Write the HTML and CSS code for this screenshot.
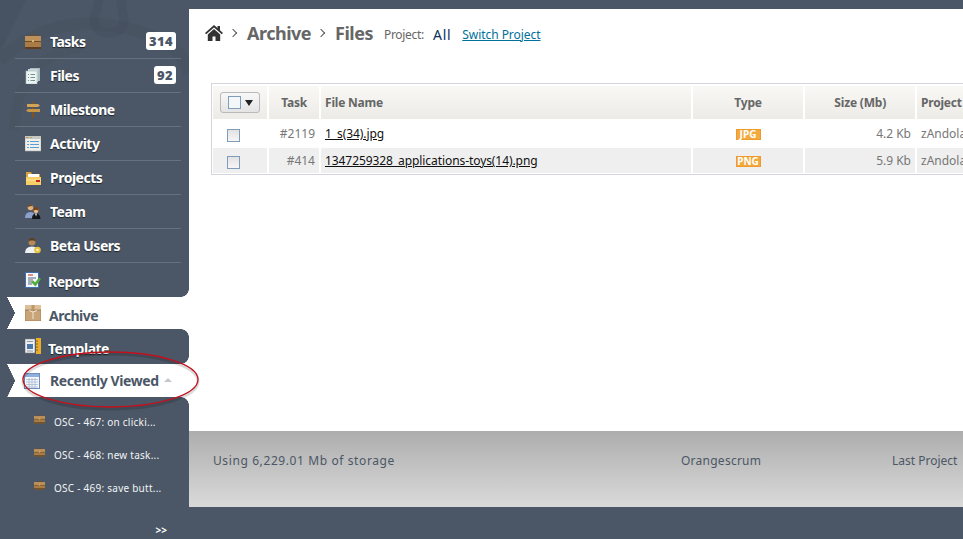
FILE: index.html
```html
<!DOCTYPE html>
<html lang="en">
<head>
    <meta charset="UTF-8">
    <meta name="viewport" content="width=device-width, initial-scale=1.0">
    <title>Archive - Files</title>
    <link rel="stylesheet" href="styles.css">
</head>
<body>
    <svg class="defs" width="0" height="0">
        <symbol id="i-brief" viewBox="0 0 16 16" preserveAspectRatio="none">
            <path d="M5.500 2.500V1h5v1.500" fill="none" stroke="#6b4a22"/>
            <rect x="0" y="2" width="16" height="13" fill="#a97c45"/>
            <rect x="0" y="2" width="16" height="5" fill="#bd9159"/>
            <rect x="0" y="13" width="16" height="2" fill="#5e4020"/>
            <rect x="0" y="7" width="16" height="1" fill="#6f4c24"/>
            <rect x="7" y="6" width="2" height="2" fill="#d9b680"/>
        </symbol>
        <symbol id="i-files" viewBox="0 0 16 16">
            <rect x="5" y="0" width="10" height="13" fill="#a7bcc0"/>
            <rect x="3" y="1" width="10" height="13" fill="#c9d8da"/>
            <rect x="1" y="3" width="11" height="13" fill="#eef4f2" stroke="#a9bdbd" stroke-width=".6"/>
            <path d="M3 6.500h1M5.500 6.500H10M3 9.500h1M5.500 9.500H10M3 12.500h1M5.500 12.500H10" stroke="#6d9197"/>
        </symbol>
        <symbol id="i-sign" viewBox="0 0 16 16">
            <rect x="7" y="0" width="2" height="16" fill="#7d5320"/>
            <path d="M2 2h11l2 1.500-2 1.500H2z" fill="#d1a458"/>
            <path d="M15 7H3L1 8.500 3 10h12z" fill="#c49646"/>
        </symbol>
        <symbol id="i-window" viewBox="0 0 16 16">
            <rect x="0" y="0" width="16" height="15" fill="#f1efea" stroke="#a8a8a4" stroke-width=".6"/>
            <rect x="0" y="0" width="16" height="3" fill="#c9c7c2"/>
            <path d="M1.500 1.500h1" stroke="#d23a2a"/>
            <path d="M3.500 1.500h1" stroke="#e3a92a"/>
            <path d="M5.500 1.500h1" stroke="#5aa83a"/>
            <path d="M2 5.500h2M5 5.500h9M2 8.500h2M5 8.500h9M2 11.500h2M5 11.500h9" stroke="#5a9fdc"/>
        </symbol>
        <symbol id="i-folder" viewBox="0 0 16 16">
            <path d="M1 2h5l1 2h8v10H1z" fill="#d6a53a"/>
            <rect x="3" y="4" width="11" height="4" fill="#fff"/>
            <rect x="1" y="7" width="15" height="8" fill="#f6cf66"/>
            <rect x="1" y="9.500" width="15" height="1" fill="#fbe7a6"/>
            <rect x="11" y="10" width="4" height="2" fill="#c8261c"/>
        </symbol>
        <symbol id="i-team" viewBox="0 0 16 16">
            <circle cx="5.500" cy="3.500" r="2.800" fill="#e2b27e"/>
            <path d="M2.500 3.500Q3 0 5.500 .5T8.500 3L7 2 4 2.500z" fill="#6b431c"/>
            <path d="M0 14q0-6 5.500-6T11 14z" fill="#8f9fcc"/>
            <circle cx="11" cy="6.500" r="2.500" fill="#eebb88"/>
            <path d="M8.500 9V6q0-3 2.500-3t2.500 3v3l-1-3h-3z" fill="#7a4413"/>
            <path d="M7 15q0-5.500 4-5.500t4.500 5.500z" fill="#15151a"/>
            <path d="M10 9.500h2l-1 3z" fill="#fff"/>
        </symbol>
        <symbol id="i-beta" viewBox="0 0 16 16">
            <circle cx="7" cy="4" r="3.500" fill="#b98a58"/>
            <path d="M3.500 4Q3.500 0 7 0t3.500 4L9 2.500H5z" fill="#5b3c1e"/>
            <path d="M0 15q0-6.500 7-6.500t6 6.500z" fill="#eef1f4"/>
            <circle cx="12.500" cy="12" r="3.300" fill="#e8c23a"/>
            <circle cx="12.500" cy="12" r="1.200" fill="#fff6c8"/>
        </symbol>
        <symbol id="i-report" viewBox="0 0 16 16">
            <rect x=".5" y=".5" width="13" height="15" fill="#f6f8fb" stroke="#3f6fb0"/>
            <path d="M3 3h5" stroke="#c8261c"/>
            <path d="M3 6h8M3 8h5M3 10h4M3 12h4" stroke="#56667a"/>
            <path d="M6 10l2.500-1.500L10 10.500 14 5.500l2 1.500-5.500 7.500z" fill="#52ab3d"/>
        </symbol>
        <symbol id="i-box" viewBox="0 0 16 16">
            <rect x="0" y="0" width="16" height="16" fill="#c9a477" stroke="#93714a" stroke-width=".6"/>
            <rect x="0" y="0" width="16" height="5" fill="#dcc09b"/>
            <path d="M0 5h16" stroke="#8d6a42" stroke-width=".7"/>
            <path d="M4 5.500q4 3 8 0M8 7v7" stroke="#f0e6d6" fill="none"/>
            <rect x="6.500" y="0" width="3" height="5" fill="#bd9664"/>
        </symbol>
        <symbol id="i-template" viewBox="0 0 16 16">
            <rect x="0" y="1" width="10" height="14" fill="#eef0f2" stroke="#777" stroke-width=".6"/>
            <rect x="2" y="6" width="6" height="5" fill="#4f76a8"/>
            <path d="M2 3.500h6M2 13h6" stroke="#8a97a8"/>
            <rect x="11" y="0" width="5" height="16" fill="#e9ad2a"/>
            <path d="M11 3h2M11 6h2M11 9h2M11 12h2" stroke="#8f6510"/>
        </symbol>
        <symbol id="i-table" viewBox="0 0 16 16">
            <rect x=".5" y=".5" width="15" height="15" fill="#f4f7fc" stroke="#6d8fc0"/>
            <rect x="1" y="1" width="14" height="3" fill="#8fb0dc"/>
            <path d="M2 6.500h12M2 9h12M2 11.500h12M2 14h12M5 5v10M8 5v10M11 5v10" stroke="#a9bad2" stroke-width=".8"/>
        </symbol>
        <symbol id="i-home" viewBox="0 0 18 16">
            <path d="M9 0L0 8l1.200 1.300L9 2.400l7.800 6.900L18 8l-3-2.700V1h-2.500v2.100z" fill="#333"/>
            <path d="M9 4L2.800 9.500V16H7.500v-4.500h3V16h4.700V9.500z" fill="#333"/>
        </symbol>
    </svg>

    <aside class="sidebar">
        <svg class="swirl" width="189" height="300" viewBox="0 0 189 300">
            <path d="M0 52L26 0H0z" fill="#3f4a59" opacity=".3"/>
            <path d="M0 60Q50 14 116 26T189 74" fill="none" stroke="#3f4a59" stroke-width="12" opacity=".2"/>
            <path d="M100 -4L94 20Q95 33 109 33T124 20L120 -4" fill="none" stroke="#3f4a59" stroke-width="9" opacity=".3"/>
            <path d="M14 130Q18 56 84 46" fill="none" stroke="#434e5d" stroke-width="10" opacity=".25"/>
        </svg>

        <ul class="menu">
            <li class="menu-item">
                <svg class="ico"><use href="#i-brief"/></svg>
                <span>Tasks</span>
                <b class="badge">314</b>
            </li>
            <li class="menu-item">
                <svg class="ico"><use href="#i-files"/></svg>
                <span>Files</span>
                <b class="badge">92</b>
            </li>
            <li class="menu-item">
                <svg class="ico"><use href="#i-sign"/></svg>
                <span>Milestone</span>
            </li>
            <li class="menu-item">
                <svg class="ico"><use href="#i-window"/></svg>
                <span>Activity</span>
            </li>
            <li class="menu-item">
                <svg class="ico"><use href="#i-folder"/></svg>
                <span>Projects</span>
            </li>
            <li class="menu-item">
                <svg class="ico"><use href="#i-team"/></svg>
                <span>Team</span>
            </li>
            <li class="menu-item">
                <svg class="ico"><use href="#i-beta"/></svg>
                <span>Beta Users</span>
            </li>
            <li class="menu-item menu-tight">
                <svg class="ico"><use href="#i-report"/></svg>
                <span>Reports</span>
            </li>
            <li class="menu-active">
                <svg class="ico"><use href="#i-box"/></svg>
                <span>Archive</span>
            </li>
            <li class="menu-item menu-tight menu-template">
                <svg class="ico"><use href="#i-template"/></svg>
                <span>Template</span>
            </li>
            <li class="menu-active menu-recent">
                <svg class="ico"><use href="#i-table"/></svg>
                <span>Recently Viewed</span>
                <i class="caret"></i>
            </li>
        </ul>

        <ul class="recent">
            <li><svg class="ico-small"><use href="#i-brief"/></svg>OSC - 467: on clicki...</li>
            <li><svg class="ico-small"><use href="#i-brief"/></svg>OSC - 468: new task...</li>
            <li><svg class="ico-small"><use href="#i-brief"/></svg>OSC - 469: save butt...</li>
        </ul>
        <div class="more">&gt;&gt;</div>

        <svg class="circle" width="186" height="64" viewBox="0 0 186 64">
            <ellipse cx="92.500" cy="33.500" rx="87.500" ry="27.500" fill="none" stroke="#000" stroke-opacity=".14" stroke-width="3"/>
            <ellipse cx="92.500" cy="31.500" rx="87.500" ry="27.500" fill="none" stroke="#c2101c" stroke-width="1.300"/>
        </svg>
    </aside>

    <div class="page">
        <main class="content">
            <div class="crumbs">
                <svg class="home"><use href="#i-home"/></svg>
                <span class="sep"></span>
                <h2>Archive</h2>
                <span class="sep"></span>
                <h2>Files</h2>
                <span class="project-label">Project:</span>
                <span class="project-name">All</span>
                <a class="switch" href="#">Switch Project</a>
            </div>

            <div class="grid-box">
                <table class="grid">
                    <thead>
                        <tr>
                            <th class="c-check"><span class="select-all"><i class="check"></i><i class="down"></i></span></th>
                            <th class="c-task">Task</th>
                            <th class="c-name">File Name</th>
                            <th class="c-type">Type</th>
                            <th class="c-size">Size (Mb)</th>
                            <th class="c-project">Project</th>
                        </tr>
                    </thead>
                    <tbody>
                        <tr class="row-first">
                            <td class="c-check"><i class="check"></i></td>
                            <td class="c-task">#2119</td>
                            <td class="c-name"><a href="#">1_s(34).jpg</a></td>
                            <td class="c-type"><span class="tag">JPG</span></td>
                            <td class="c-size">4.2 Kb</td>
                            <td class="c-project">zAndola</td>
                        </tr>
                        <tr class="row-alt">
                            <td class="c-check"><i class="check"></i></td>
                            <td class="c-task">#414</td>
                            <td class="c-name"><a href="#">1347259328_applications-toys(14).png</a></td>
                            <td class="c-type"><span class="tag">PNG</span></td>
                            <td class="c-size">5.9 Kb</td>
                            <td class="c-project">zAndola</td>
                        </tr>
                    </tbody>
                </table>
            </div>
        </main>

        <footer class="footer">
            <span class="footer-usage">Using 6,229.01 Mb of storage</span>
            <span class="footer-name">Orangescrum</span>
            <span>Last Project</span>
        </footer>
    </div>
</body>
</html>
```

FILE: styles.css
```css
* {
    box-sizing: border-box;
}

html, body {
    height: 100%;
}

body {
    margin: 0;
    display: flex;
    overflow: hidden;
    background-color: #4b5766;
    font-family: "Noto Sans", Arial, sans-serif;
}

.defs {
    position: absolute;
}

ul {
    list-style: none;
    margin: 0;
    padding: 0;
}

/* sidebar */
.sidebar {
    position: relative;
    flex: 0 0 189px;
    padding-top: 25px;
    background-color: #4b5766;
}

.swirl {
    position: absolute;
    top: 0;
    left: 0;
}

.menu {
    position: relative;
}

.menu-item {
    display: flex;
    align-items: center;
    height: 34px;
    margin: 0 8px 0 15px;
    padding: 0 5px 0 10px;
    border-bottom: 1px solid #66717f;
    color: #fff;
    font-size: 14px;
    font-weight: 700;
    letter-spacing: -0.5px;
    text-shadow: 0 1px 1px rgba(0, 0, 0, 0.6);
}

.menu-tight {
    padding-left: 10px;
    border-bottom: none;
}

.menu-tight span {
    margin: 2px 0 0 -2px;
}

.menu-template span {
    margin-top: 4px;
}

.menu-item .ico {
    margin-right: 9px;
}

.ico {
    flex: none;
    width: 16px;
    height: 16px;
}

.badge {
    height: 18px;
    margin: -1px 0 0 auto;
    padding: 0 3px;
    border-radius: 3px;
    background-color: #fff;
    color: #4b5766;
    font-size: 13px;
    line-height: 18px;
    letter-spacing: 0.4px;
    text-shadow: none;
}

/* white row with a notch cut in its left end */
.menu-active {
    position: relative;
    display: flex;
    align-items: center;
    height: 32px;
    padding-left: 25px;
    background:
        linear-gradient(#fff, #fff) 15px 0 / 100% 100% no-repeat,
        linear-gradient(to top right, transparent 49%, #fff 51%) 7px 0 / 8px 50% no-repeat,
        linear-gradient(to bottom right, transparent 49%, #fff 51%) 7px 100% / 8px 50% no-repeat;
    color: #4b5766;
    font-size: 14px;
    font-weight: 700;
    letter-spacing: -0.5px;
}

.menu-active .ico {
    margin-right: 8px;
}

.menu-active span {
    margin-top: 5px;
}

/* rounded corners of the dark panels on either side of the white row */
.menu-active::before,
.menu-active::after {
    content: "";
    position: absolute;
    right: 0;
    width: 8px;
    height: 8px;
}

.menu-active::before {
    top: -8px;
    background: radial-gradient(circle at 0 0, transparent 7.500px, #fff 8px);
}

.menu-active::after {
    bottom: -8px;
    background: radial-gradient(circle at 0 100%, transparent 7.500px, #fff 8px);
}

.menu-recent {
    height: 33px;
    margin-top: 1px;
    padding-left: 24px;
}

.menu-recent .ico {
    margin-right: 10px;
}

.menu-recent span {
    margin-top: 0;
    letter-spacing: -0.4px;
}

.caret {
    width: 0;
    height: 0;
    margin: 0 0 2px 5px;
    border: 4px solid transparent;
    border-top: none;
    border-bottom: 4px solid #c4c8cc;
}

.recent {
    padding-top: 8px;
}

.recent li {
    display: flex;
    align-items: center;
    height: 33px;
    padding-left: 34px;
    color: #f2f4f6;
    font-size: 10px;
    letter-spacing: 0.25px;
    white-space: nowrap;
}

.ico-small {
    flex: none;
    width: 11px;
    height: 9px;
    margin: -4px 9px 0 0;
}

.more {
    margin-top: 19px;
    padding-right: 22px;
    color: #fff;
    font-size: 10px;
    font-weight: 700;
    text-align: right;
}

.circle {
    position: absolute;
    top: 348px;
    left: 18px;
    z-index: 2;
    overflow: visible;
}

/* main column */
.page {
    flex: 1;
    display: flex;
    flex-direction: column;
    min-width: 0;
    height: 507px;
    padding-top: 9px;
}

.content {
    flex: 1;
    overflow: hidden;
    background-color: #fff;
}

.crumbs {
    display: flex;
    align-items: center;
    height: 24px;
    margin: 12px 0 38px 16px;
    color: #666;
}

.home {
    width: 18px;
    height: 16px;
}

.sep {
    width: 6px;
    height: 6px;
    margin: 0 11px 0 7px;
    border-top: 1px solid #555;
    border-right: 1px solid #555;
    transform: rotate(45deg);
}

.crumbs h2 {
    margin: 0;
    color: #666;
    font-size: 18px;
    font-weight: 700;
    letter-spacing: -0.5px;
}

.project-label {
    margin: 2px 0 0 11px;
    font-size: 12px;
    letter-spacing: -0.3px;
}

.project-name {
    margin: 2px 0 0 9px;
    color: #0b2f63;
    font-size: 14px;
    letter-spacing: 0.7px;
}

.switch {
    margin: 2px 0 0 11px;
    color: #00709c;
    font-size: 12px;
    letter-spacing: -0.05px;
}

.grid-box {
    width: 900px;
    margin-left: 22px;
    padding: 2px 0 1px;
    border: 1px solid #d3d5da;
    border-right: none;
}

.grid {
    table-layout: fixed;
    width: 858px;
    margin-left: -1px;
    border-collapse: separate;
    border-spacing: 2px 0;
    font-size: 12px;
}

.grid th {
    height: 33px;
    padding: 0 4px;
    background: linear-gradient(#f9f8f6, #ecebe6);
    color: #666;
    font-size: 12px;
    font-weight: 700;
    letter-spacing: -0.2px;
}

.grid td {
    padding: 0 4px;
    color: #777;
}

.row-first td {
    height: 29px;
}

.row-alt td {
    height: 25px;
    background-color: #efefef;
}

.c-check {
    width: 54px;
}

.grid td.c-check {
    padding: 4px 0 0 14px;
}

.grid th.c-check {
    padding: 0 0 0 7px;
}

.c-task {
    width: 50px;
    text-align: right;
}

.grid th.c-task {
    padding-right: 12px;
    text-align: right;
}

.c-name {
    width: 370px;
    text-align: left;
    letter-spacing: -0.08px;
}

.c-name a {
    color: #111;
}

.c-type {
    width: 110px;
    text-align: center;
}

.c-size {
    width: 110px;
    text-align: right;
}

.grid th.c-size {
    padding-right: 29px;
    text-align: right;
}

.c-project {
    width: 150px;
    text-align: left;
}

.check {
    display: block;
    width: 13px;
    height: 13px;
    border: 1px solid #7f9db9;
    background: linear-gradient(#e2e2e2, #f6f6f6);
}

.select-all {
    display: flex;
    align-items: center;
    justify-content: center;
    gap: 4px;
    width: 40px;
    height: 21px;
    border: 1px solid #b9b9b9;
    border-radius: 3px;
    background: linear-gradient(#f8f8f8, #e4e4e4);
}

.select-all .check {
    background: #f4f7fa;
}

.down {
    width: 0;
    height: 0;
    border: 4px solid transparent;
    border-bottom: none;
    border-top: 6px solid #222;
}

.tag {
    display: inline-block;
    width: 25px;
    height: 11px;
    border: 1px solid #ee9a2e;
    background-color: #f2a93e;
    color: #fff;
    font-size: 10px;
    font-weight: 700;
    line-height: 9px;
    text-align: center;
    vertical-align: middle;
}

.footer {
    flex: 0 0 76px;
    display: grid;
    grid-template-columns: 468px 211px 1fr;
    align-items: center;
    padding: 0 0 18px 24px;
    background: linear-gradient(#adadad, #dadada);
    color: #4b5766;
    font-size: 12px;
    white-space: nowrap;
}

.footer-usage {
    letter-spacing: 0.6px;
}

.footer-name {
    letter-spacing: 0.25px;
}
```
